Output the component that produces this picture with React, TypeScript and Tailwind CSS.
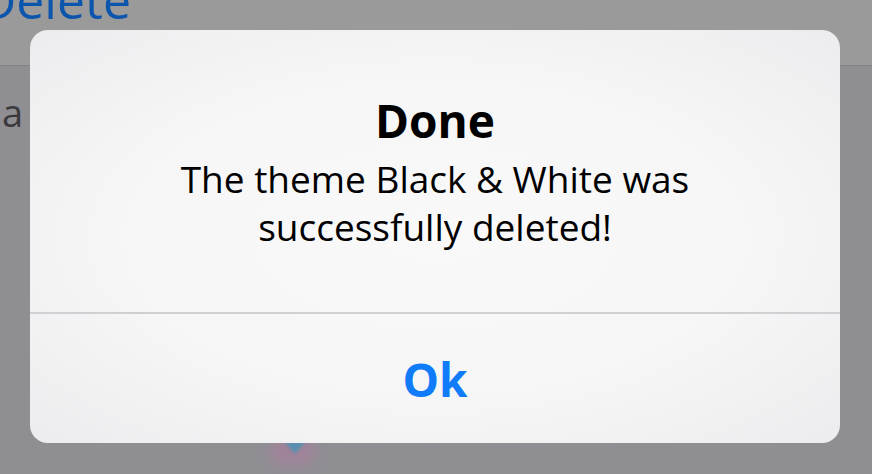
import React from "react";

export default function App() {
  return (
    <div
      className="relative w-[872px] h-[474px] overflow-hidden bg-[#8f8e93]"
      style={{ fontFamily: '"Open Sans", "Noto Sans", sans-serif' }}
    >
      <div className="h-[66px] bg-[#9a9a9a] border-b border-[#808083] overflow-hidden">
        <div className="-mt-[32px] -ml-[20px] text-[50px] leading-[64px] text-[#0b55ad]">Delete</div>
      </div>
      <div className="pl-[2px] pt-[22px] text-[38px] leading-[48px] text-[#3a3a3c]">a</div>

      <div className="absolute left-[270px] top-[436px] w-[46px] h-[30px] rounded-full bg-[#b07aa0] opacity-50 blur-[6px]" />
      <div className="absolute left-[283px] top-[440px] w-0 h-0 border-l-[12px] border-r-[12px] border-t-[14px] border-l-transparent border-r-transparent border-t-[#5a8fb0] blur-[1.5px]" />

      <div className="absolute left-[30px] top-[30px] w-[810px] h-[413px] rounded-[18px] overflow-hidden flex flex-col bg-[radial-gradient(ellipse_at_center,#f9f9fa_0%,#f6f6f7_55%,#ececee_100%)]">
        <div className="h-[282px] flex flex-col items-center pt-[59px]">
          <div className="text-[46px] leading-[62px] font-bold text-black">Done</div>
          <div className="text-[37px] leading-[48px] text-black text-center mt-[4px]">
            The theme Black &amp; White was
            <br />
            successfully deleted!
          </div>
        </div>
        <div className="h-[2px] bg-[#cfcfd4]" />
        <div className="flex-1 flex items-center justify-center">
          <div className="text-[46px] leading-[60px] font-bold text-[#117cf9]">Ok</div>
        </div>
      </div>
    </div>
  );
}
